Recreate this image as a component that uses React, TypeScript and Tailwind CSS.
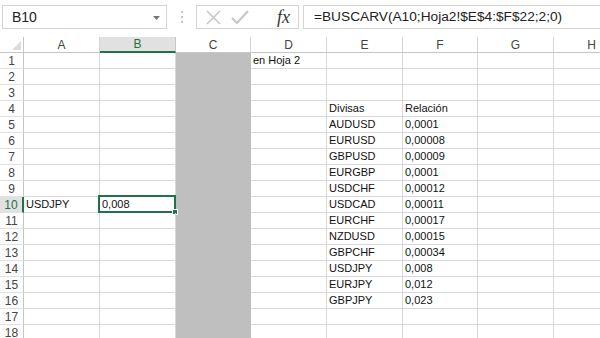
import React from 'react'

type Col = { key: string; width: string }

const cols: Col[] = [
  { key: 'A', width: 'w-[76px]' },
  { key: 'B', width: 'w-[76px]' },
  { key: 'C', width: 'w-[75px]' },
  { key: 'D', width: 'w-[76px]' },
  { key: 'E', width: 'w-[76px]' },
  { key: 'F', width: 'w-[75px]' },
  { key: 'G', width: 'w-[76px]' },
  { key: 'H', width: 'w-[76px]' },
]

// cell values by row number, keyed by column letter
const cells: Record<number, Record<string, string>> = {
  1: { D: 'en Hoja 2' },
  4: { E: 'Divisas', F: 'Relación' },
  5: { E: 'AUDUSD', F: '0,0001' },
  6: { E: 'EURUSD', F: '0,00008' },
  7: { E: 'GBPUSD', F: '0,00009' },
  8: { E: 'EURGBP', F: '0,0001' },
  9: { E: 'USDCHF', F: '0,00012' },
  10: { A: 'USDJPY', B: '0,008', E: 'USDCAD', F: '0,00011' },
  11: { E: 'EURCHF', F: '0,00017' },
  12: { E: 'NZDUSD', F: '0,00015' },
  13: { E: 'GBPCHF', F: '0,00034' },
  14: { E: 'USDJPY', F: '0,008' },
  15: { E: 'EURJPY', F: '0,012' },
  16: { E: 'GBPJPY', F: '0,023' },
}

const rows = Array.from({ length: 18 }, (_, i) => i + 1)

function FormulaBar() {
  return (
    <div className="flex h-[37px] items-start pt-[5px] pl-[2px] bg-white">
      <div className="flex h-[24px] w-[165px] items-center justify-between border border-[#d4d4d4] pl-[9px] pr-[6px] text-[14px] text-[#222]">
        <span>B10</span>
        <svg width="7" height="4" viewBox="0 0 7 4" className="mt-[1px]">
          <path d="M0 0h7L3.5 4z" fill="#777" />
        </svg>
      </div>
      <div className="flex w-[29px] flex-col items-center gap-[3px] pt-[6px]">
        <span className="h-[2px] w-[2px] bg-[#c4c4c4]" />
        <span className="h-[2px] w-[2px] bg-[#c4c4c4]" />
        <span className="h-[2px] w-[2px] bg-[#c4c4c4]" />
      </div>
      <div className="flex h-[24px] w-[103px] items-center border border-[#d4d4d4] pl-[8px]">
        <svg width="17" height="17" viewBox="0 0 17 17">
          <path d="M2 2l13 13M15 2L2 15" stroke="#c6c6c6" strokeWidth="1.5" fill="none" />
        </svg>
        <svg width="18" height="16" viewBox="0 0 18 16" className="ml-[9px]">
          <path d="M1 9l5 5L17 2" stroke="#c6c6c6" strokeWidth="2.2" fill="none" />
        </svg>
        <span className="ml-[28px] italic text-[18px] leading-none text-[#333] font-['Liberation_Serif',serif]">
          fx
        </span>
      </div>
      <div className="ml-[4px] flex h-[24px] flex-1 items-center border border-r-0 border-[#d4d4d4] pl-[10px] text-[13.7px] text-[#222]">
        =BUSCARV(A10;Hoja2!$E$4:$F$22;2;0)
      </div>
    </div>
  )
}

function HeaderRow() {
  return (
    <div className="flex h-[16px] border-b border-[#c6c6c6]">
      <div className="relative w-[24px] shrink-0 border-r border-[#c6c6c6]">
        <svg width="9" height="9" viewBox="0 0 9 9" className="absolute right-[2px] bottom-[2px]">
          <path d="M9 0v9H0z" fill="#dcdcdc" />
        </svg>
      </div>
      {cols.map((c) => {
        const active = c.key === 'B'
        return (
          <div
            key={c.key}
            className={
              active
                ? `${c.width} shrink-0 flex items-center justify-center border-r border-[#c6c6c6] border-b-2 border-b-[#217346] bg-[#e1e1e1] text-[12px] text-[#217346] -mb-px`
                : `${c.width} shrink-0 flex items-center justify-center border-r border-[#d4d4d4] text-[12px] text-[#444]`
            }
          >
            {c.key}
          </div>
        )
      })}
    </div>
  )
}

function Row({ n }: { n: number }) {
  const data = cells[n] || {}
  const active = n === 10
  return (
    <div className="flex h-[16px]">
      <div
        className={
          active
            ? 'w-[24px] shrink-0 flex items-center justify-center border-r-2 border-[#217346] border-b border-b-[#e1e1e1] bg-[#e1e1e1] text-[12px] text-[#217346]'
            : 'w-[24px] shrink-0 flex items-center justify-center border-r border-[#c6c6c6] border-b border-b-[#e1e1e1] text-[12px] text-[#444]'
        }
      >
        {n}
      </div>
      {cols.map((c) => {
        const value = data[c.key]
        if (c.key === 'C') {
          return <div key={c.key} className={`${c.width} shrink-0 bg-[#bfbfbf]`} />
        }
        const selected = active && c.key === 'B'
        return (
          <div
            key={c.key}
            className={`${c.width} relative shrink-0 flex items-center whitespace-nowrap border-r border-b border-[#d9d9d9] pl-[2px] text-[11px] text-[#111]`}
          >
            {value}
            {selected && (
              <>
                <div className="pointer-events-none absolute -left-[2px] -top-[2px] h-[18px] w-[78px] border-2 border-[#217346]" />
                <div className="absolute -right-[3px] -bottom-[3px] h-[6px] w-[6px] border border-white bg-[#217346]" />
              </>
            )}
          </div>
        )
      })}
    </div>
  )
}

export default function App() {
  return (
    <div className="h-[338px] w-[600px] overflow-hidden bg-white font-['Liberation_Sans',Arial,sans-serif]">
      <FormulaBar />
      <HeaderRow />
      {rows.map((n) => (
        <Row key={n} n={n} />
      ))}
    </div>
  )
}
